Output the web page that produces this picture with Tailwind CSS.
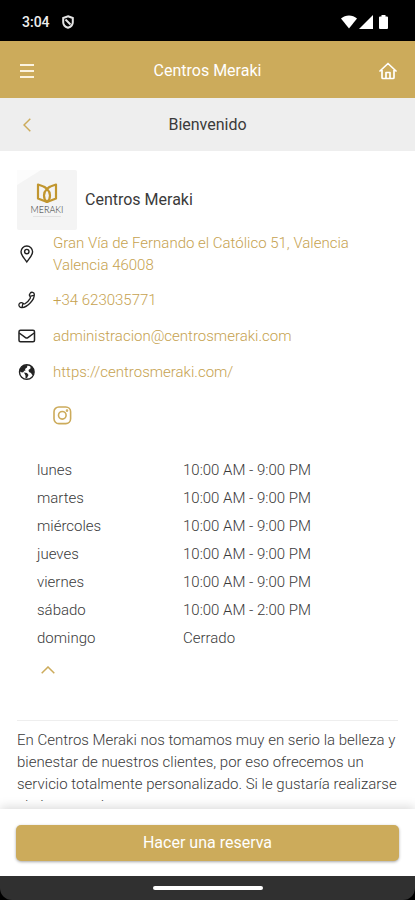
<!DOCTYPE html>
<html lang="es">
<head>
  <meta charset="UTF-8">
  <meta name="viewport" content="width=device-width, initial-scale=1">
  <title>Centros Meraki</title>
  <script src="https://cdn.jsdelivr.net/npm/@tailwindcss/browser@4"></script>
</head>
<body class="flex flex-col h-screen bg-white text-[#3a3a3a] font-[Roboto,sans-serif] text-[15px] overflow-hidden">

  <!-- Status bar -->
  <div class="flex items-center justify-between h-[41px] shrink-0 pt-0.5 pl-[22px] pr-[27px] bg-black text-[#eeeeee]">
    <div class="flex items-center gap-3">
      <span class="text-sm font-medium">3:04</span>
      <svg class="w-3 h-[14px]" viewBox="0 0 12 14" fill="none" stroke="#e5e5e5" stroke-width="2">
        <path d="M6 1.200 10.800 3v4.200c0 2.600-2 4.600-4.800 5.600C3.200 11.800 1.200 9.800 1.200 7.200V3Z"/>
        <path d="M3.500 4.500l5 5"/>
      </svg>
    </div>
    <div class="flex items-center gap-0.5">
      <svg class="w-4 h-[14px]" viewBox="0 0 16 14" fill="#fff"><path d="M0 3.500C4.500-.5 11.500-.5 16 3.500L8 13.500Z"/></svg>
      <svg class="w-[14px] h-[14px]" viewBox="0 0 14 14" fill="#fff"><path d="M14 0v14H0Z"/></svg>
      <svg class="w-[9px] h-[14px] ml-1" viewBox="0 0 9 14" fill="#fff"><path d="M2.500 0h4v1.500H8a1 1 0 0 1 1 1V13a1 1 0 0 1-1 1H1a1 1 0 0 1-1-1V2.500a1 1 0 0 1 1-1h1.500Z"/></svg>
    </div>
  </div>

  <!-- App header -->
  <header class="flex items-center justify-between h-[57px] shrink-0 px-[17px] pt-0.5 bg-[#ccab5b] text-white">
    <button type="button" aria-label="Menú" class="flex w-5 justify-center">
      <svg class="w-[14px] h-[14px] shrink-0" viewBox="0 0 14 14" stroke="#fbf3df" stroke-width="2"><path d="M0 1h14M0 7h14M0 13h14"/></svg>
    </button>
    <h1 class="text-base">Centros Meraki</h1>
    <a href="#" aria-label="Inicio" class="flex w-5 justify-center">
      <svg class="w-[18px] h-[18px]" viewBox="0 0 18 18" fill="none" stroke="#fff" stroke-width="1.700" stroke-linecap="round" stroke-linejoin="round">
        <path d="M1 9 9 1.500 17 9M3 8v7.500A1 1 0 0 0 4 16.500h10a1 1 0 0 0 1-1V8M7 16v-5.500h4V16"/>
      </svg>
    </a>
  </header>

  <div class="flex items-center justify-between h-[53px] shrink-0 px-[17px] bg-[#eeeeee]">
    <button type="button" aria-label="Volver" class="flex w-5 justify-center">
      <svg class="w-2 h-[14px] shrink-0" viewBox="0 0 8 14" fill="none" stroke="#ccab5b" stroke-width="1.500"><path d="M7.300.7 1 7l6.300 6.300"/></svg>
    </button>
    <h2 class="text-base">Bienvenido</h2>
    <span class="w-5"></span>
  </div>

  <main class="flex-1 min-h-0 overflow-y-auto [scrollbar-width:none] px-[17px] pt-[19px]">
    <div class="flex items-center gap-2">
      <svg class="w-[60px] h-[60px]" viewBox="0 0 60 60" role="img" aria-label="Meraki">
        <rect width="60" height="60" rx="2" fill="#f4f4f4"/>
        <path d="M0 0h24L0 15Z" fill="#fcfcfc"/>
        <g fill="none" stroke="#c1962f" stroke-width="2.200" stroke-linejoin="round">
          <path d="M21 14.500c7.500 2 12 6 12 11 0 3-1 5-3 6.500L21 28.500Z"/>
          <path d="M39 14.500c-7.500 2-12 6-12 11 0 3 1 5 3 6.500L39 28.500Z"/>
        </g>
        <text x="30" y="43" text-anchor="middle" font-family="Lato" font-size="9" font-weight="300" fill="#333">MERAKI</text>
        <path d="M16 46.500h28" stroke="#e2e2e2" stroke-width="1"/>
      </svg>
      <h3 class="text-base">Centros Meraki</h3>
    </div>

    <ul class="mt-0.5 font-light text-[#c6a250]">
      <li class="flex items-center gap-4">
        <svg class="w-5 h-5 shrink-0" viewBox="0 0 20 20" fill="none" stroke="#222" stroke-width="1.400">
          <path d="M9.800 18C8 15 4 11.500 4 7.800a5.800 5.800 0 0 1 11.600 0c0 3.700-4 7.200-5.800 10.200Z"/><circle cx="9.800" cy="7.600" r="2.200"/>
        </svg>
        <a href="#" class="leading-[22px]">Gran Vía de Fernando el Católico 51, Valencia<br>Valencia 46008</a>
      </li>
      <li class="flex items-center gap-4 mt-3">
        <svg class="w-5 h-5 shrink-0" viewBox="0 0 20 20" fill="none" stroke="#222" stroke-width="1.300" stroke-linejoin="round">
          <path d="M13.200 3.200C14.500 1.500 17 2.200 17.300 4.200C17.800 9.500 10.500 17.300 5 17.600C2.800 17.800 1 15.500 2.300 13.600C3.500 12.300 5 12.300 6 13.300C6.800 14.200 7.500 14 8.300 13.500C10.500 12 12 10.500 13.200 8.400C13.600 7.600 13.500 7 12.900 6.300C12.100 5.300 12.300 4.200 13.200 3.200ZM12.900 6.300l3.800-1M6 13.300l-1 3.800"/>
        </svg>
        <a href="tel:+34623035771" class="leading-6">+34 623035771</a>
      </li>
      <li class="flex items-center gap-4 mt-3">
        <svg class="w-5 h-5 shrink-0" viewBox="0 0 20 20" fill="none" stroke="#222" stroke-width="1.500" stroke-linejoin="round">
          <rect x="2" y="4.200" width="15.500" height="11.500" rx="1.500"/><path d="M2.200 7l6.300 4.600a2 2 0 0 0 2.400 0L17.200 7"/>
        </svg>
        <a href="mailto:administracion@centrosmeraki.com" class="leading-6">administracion@centrosmeraki.com</a>
      </li>
      <li class="flex items-center gap-4 mt-3">
        <svg class="w-5 h-5 shrink-0" viewBox="0 0 20 20">
          <circle cx="9.800" cy="10" r="7.300" fill="none" stroke="#222" stroke-width="1.400"/>
          <path d="M3 7.500 6 3.500 10.500 3 10 5.500 8 7 8.500 8.500 6.500 9 7 10 5 10.500 3 9.500ZM7 10.500l3 .5 1.500 2-1.500 3H8.500V13.500ZM13.500 4l3 2.500.5 4-1.500 3-1.500-2.500-2-1-.5-2L13.500 6.500Z" fill="#222"/>
        </svg>
        <a href="https://centrosmeraki.com/" class="leading-6">https://centrosmeraki.com/</a>
      </li>
    </ul>

    <a href="#" aria-label="Instagram" class="block w-5 mt-[22px] ml-9">
      <svg class="w-5 h-5" viewBox="0 0 20 20" fill="none" stroke="#ccab5b" stroke-width="1.600">
        <rect x="1" y="1" width="16.600" height="16.600" rx="4.800"/><circle cx="9.300" cy="9.300" r="3.800"/><circle cx="14" cy="4.600" r=".5" fill="#ccab5b"/>
      </svg>
    </a>

    <table class="mt-[30px] ml-5 leading-7">
      <tbody class="font-light">
        <tr><td class="w-[146px]">lunes</td><td>10:00 AM - 9:00 PM</td></tr>
        <tr><td>martes</td><td>10:00 AM - 9:00 PM</td></tr>
        <tr><td>miércoles</td><td>10:00 AM - 9:00 PM</td></tr>
        <tr><td>jueves</td><td>10:00 AM - 9:00 PM</td></tr>
        <tr><td>viernes</td><td>10:00 AM - 9:00 PM</td></tr>
        <tr><td>sábado</td><td>10:00 AM - 2:00 PM</td></tr>
        <tr><td>domingo</td><td>Cerrado</td></tr>
      </tbody>
    </table>
    <button type="button" aria-label="Ocultar horario" class="block mt-[14px] ml-6">
      <svg class="w-[14px] h-2" viewBox="0 0 14 8" fill="none" stroke="#ccab5b" stroke-width="1.500"><path d="M.7 7.300 7 1l6.300 6.300"/></svg>
    </button>

    <p class="mt-[46px] pt-2 border-t border-[#eeeeee] font-light leading-[22px]">En Centros Meraki nos tomamos muy en serio la belleza y bienestar de nuestros clientes, por eso ofrecemos un servicio totalmente personalizado. Si le gustaría realizarse algún tratamiento</p>
  </main>

  <footer class="shrink-0 mt-2 px-4 pt-4 pb-[15px] bg-white shadow-[0_-2px_10px_rgba(0,0,0,0.15)]">
    <button type="button" class="w-full h-9 rounded-[5px] bg-[#ccab5b] text-base text-white shadow-[0_1px_3px_rgba(0,0,0,0.35)]">Hacer una reserva</button>
  </footer>

  <!-- Gesture bar -->
  <div class="shrink-0 bg-black">
    <div class="flex items-center justify-center h-6 rounded-b-xl bg-[#303030]">
      <span class="w-[110px] h-1 rounded-full bg-white"></span>
    </div>
  </div>
</body>
</html>
